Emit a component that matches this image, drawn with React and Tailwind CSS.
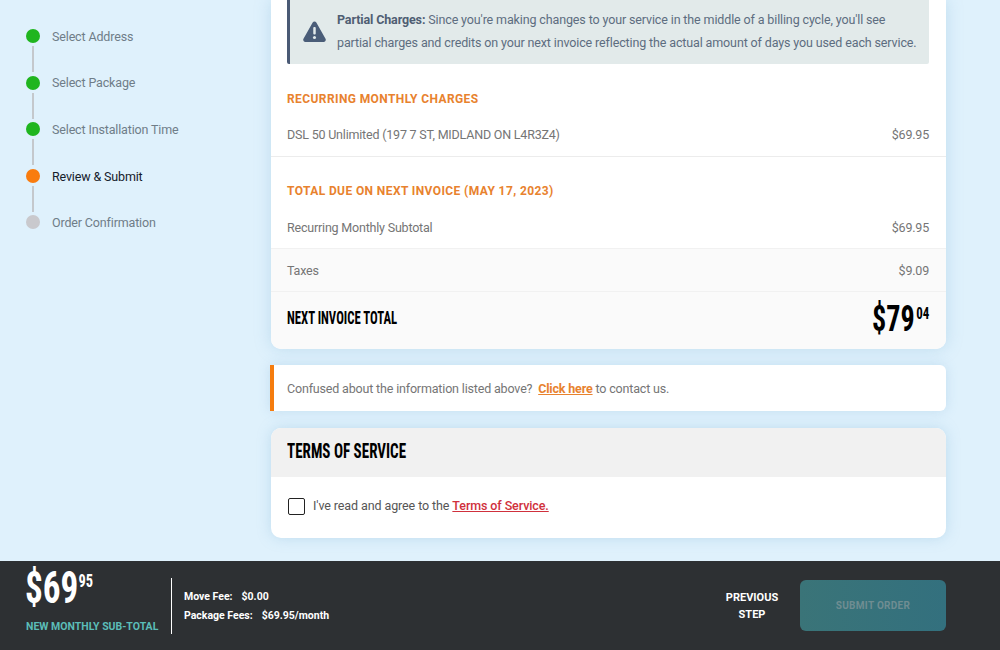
const body = { fontFamily: '"Roboto", "Liberation Sans", sans-serif' };
const condensed = { fontFamily: '"Roboto Condensed", "Open Sans Condensed", "Roboto", sans-serif', fontStretch: "75%" };

const STEPS = [
  { label: "Select Address", dot: "bg-[#1fb51f]", text: "text-[#6f7d88]" },
  { label: "Select Package", dot: "bg-[#1fb51f]", text: "text-[#6f7d88]" },
  { label: "Select Installation Time", dot: "bg-[#1fb51f]", text: "text-[#6f7d88]" },
  { label: "Review & Submit", dot: "bg-[#f97c0e]", text: "text-[#15202b]" },
  { label: "Order Confirmation", dot: "bg-[#c9c9cd]", text: "text-[#6f7d88]", last: true },
];

const Sidebar = () => (
  <aside className="w-[271px] shrink-0 pt-[29px] pl-[26px]">
    {STEPS.map((step) => (
      <div key={step.label}>
        <div className="flex items-center gap-[12px] h-[14px]">
          <span className={`w-[14px] h-[14px] rounded-full ${step.dot}`} />
          <span className={`pt-[2px] text-[12.5px] leading-none tracking-[-0.15px] ${step.text}`}>{step.label}</span>
        </div>
        {!step.last && <div className="ml-[6px] w-[1.5px] h-[26px] my-[3.3px] bg-[#c4c8cc]" />}
      </div>
    ))}
  </aside>
);

const Row = ({ label, value, className = "" }) => (
  <div className={`flex justify-between items-center pl-[16px] pr-[17px] text-[12.5px] tracking-[-0.2px] text-[#757575] ${className}`}>
    <span>{label}</span>
    <span>{value}</span>
  </div>
);

const SectionTitle = ({ children, className = "" }) => (
  <h3 className={`pl-[16px] text-[12px] leading-none font-bold tracking-[0.4px] text-[#e8822e] ${className}`}>
    {children}
  </h3>
);

const Charges = () => (
  <section className="bg-white rounded-b-[10px] shadow-[0_0_16px_rgba(130,180,215,0.35)] overflow-hidden">
    <div className="pl-[16px] pr-[17px]">
      <div className="flex items-center h-[64px] gap-[11px] pl-[13px] pb-[1px] bg-[#e2eaea] border-l-[3px] border-[#4a5a75] rounded-b-[2px]">
        <svg width="23" height="21" viewBox="0 0 24 21" preserveAspectRatio="none" className="shrink-0">
          <path d="M12 0.5c.8 0 1.500.4 1.900 1.100l9.600 16.200c.8 1.400-.2 3.200-1.900 3.200H2.400C.7 21-.3 19.200.5 17.800l9.600-16.200C10.500.9 11.200.5 12 .5z" fill="#4a5d78" />
          <rect x="10.700" y="6" width="2.600" height="7.500" rx="1" fill="#e2eaea" />
          <circle cx="12" cy="16.500" r="1.600" fill="#e2eaea" />
        </svg>
        <p className="text-[12.5px] leading-[22.5px] tracking-[-0.13px] text-[#5d6d80] whitespace-nowrap">
          <b className="font-bold text-[#4f5e73]">Partial Charges:</b> Since you're making changes to your service in the middle of a billing cycle, you'll see
          <br />
          partial charges and credits on your next invoice reflecting the actual amount of days you used each service.
        </p>
      </div>
    </div>
    <SectionTitle className="pt-[29px]">RECURRING MONTHLY CHARGES</SectionTitle>
    <Row label="DSL 50 Unlimited (197 7 ST, MIDLAND ON L4R3Z4)" value="$69.95" className="h-[51px] pt-[9px]" />
    <div className="h-px bg-[#ececec]" />
    <SectionTitle className="pt-[28px]">TOTAL DUE ON NEXT INVOICE (MAY 17, 2023)</SectionTitle>
    <Row label="Recurring Monthly Subtotal" value="$69.95" className="h-[51px] pt-[11px]" />
    <div className="bg-[#fafafa]">
      <Row label="Taxes" value="$9.09" className="h-[44px] pt-[2px] border-t border-b border-[#f1f1f1]" />
      <div className="flex justify-between items-center h-[57px] pl-[16px] pr-[17px] pb-[5px] text-black">
        <span style={condensed} className="inline-block origin-left scale-x-[0.67] whitespace-nowrap text-[19px] font-bold">NEXT INVOICE TOTAL</span>
        <span style={condensed} className="flex items-start origin-right scale-x-[0.76] font-bold leading-none">
          <span className="text-[37px]">$79</span>
          <span className="text-[17px] ml-[2px] mt-[5px]">04</span>
        </span>
      </div>
    </div>
  </section>
);

const ContactNotice = () => (
  <section className="flex items-center h-[46px] pl-[13px] pt-[2px] bg-white border-l-[4px] border-[#f57c0e] rounded-r-[6px] shadow-[0_0_12px_rgba(130,180,215,0.3)] text-[12.5px] tracking-[-0.17px] text-[#757575] -ml-px">
    <span>
      Confused about the information listed above?&nbsp;{" "}
      <a className="font-bold underline text-[#e8822e]">Click here</a> to contact us.
    </span>
  </section>
);

const Terms = () => (
  <section className="bg-white rounded-[10px] overflow-hidden shadow-[0_0_14px_rgba(130,180,215,0.35)]">
    <div className="flex items-center h-[49px] pl-[16px] pb-[2px] bg-[#f1f1f1]">
      <h2 style={condensed} className="inline-block origin-left scale-x-[0.717] whitespace-nowrap text-[21px] font-bold text-black">TERMS OF SERVICE</h2>
    </div>
    <div className="flex items-center h-[61px] pl-[17px] pb-[3px] gap-[9px] text-[12.5px] tracking-[-0.1px] text-[#555]">
      <span className="w-[17px] h-[17px] rounded-[2px] border-[1.5px] border-[#222] bg-white" />
      <span className="-ml-px">
        I've read and agree to the{" "}
        <a className="font-medium underline text-[#d0303c]">Terms of Service.</a>
      </span>
    </div>
  </section>
);

const Footer = () => (
  <footer className="flex items-center h-[89px] shrink-0 bg-[#2d3033] pl-[25px] pr-[54px] text-white">
    <div className="w-[146px] self-start pt-[5px]">
      <div style={condensed} className="flex items-start origin-left scale-x-[0.8] font-bold leading-none h-[50px]">
        <span className="text-[44px]">$69</span>
        <span className="text-[18px] mt-[6px]">95</span>
      </div>
      <p className="mt-[6px] ml-px text-[10.5px] font-bold leading-none text-[#5bbdb8] whitespace-nowrap">NEW MONTHLY SUB-TOTAL</p>
    </div>
    <div className="w-px h-[56px] bg-white" />
    <dl className="ml-[12px] text-[10.5px] font-bold leading-[19px]">
      <div className="flex gap-[9px]"><dt>Move Fee:</dt><dd>$0.00</dd></div>
      <div className="flex gap-[9px]"><dt>Package Fees:</dt><dd>$69.95/month</dd></div>
    </dl>
    <button className="ml-auto w-[60px] text-[11px] font-bold leading-[17px] text-center">PREVIOUS STEP</button>
    <button className="ml-[18px] w-[146px] h-[51px] rounded-[6px] bg-gradient-to-r from-[#3a7478] to-[#33707e] text-[10px] font-bold tracking-[0.3px] text-[#6f8d92]">
      SUBMIT ORDER
    </button>
  </footer>
);

export default function App() {
  return (
    <div style={body} className="flex flex-col h-[650px] overflow-hidden bg-[#dff1fc]">
      <div className="flex flex-1 min-h-0">
        <Sidebar />
        <main className="w-[675px] flex flex-col">
          <Charges />
          <div className="mt-[16px]"><ContactNotice /></div>
          <div className="mt-[17px]"><Terms /></div>
        </main>
      </div>
      <Footer />
    </div>
  );
}
